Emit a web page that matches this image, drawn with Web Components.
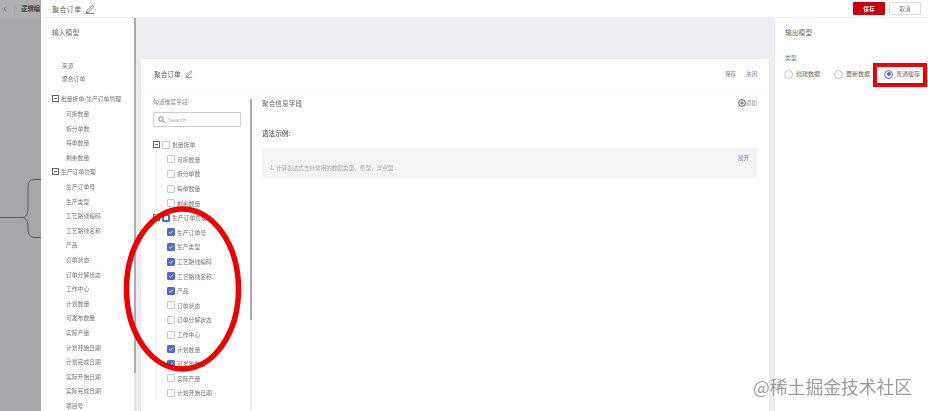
<!DOCTYPE html>
<html lang="zh"><head><meta charset="utf-8"><title>聚合订单</title>
<style>
html,body{margin:0;padding:0;background:#fff;}
body{width:928px;height:411px;overflow:hidden;font-family:"Noto Sans CJK SC","Liberation Sans",sans-serif;color:#666;}
</style></head><body>
<x-app></x-app>
<script>
const PENCIL=`<svg width="10" height="10" viewBox="0 0 10 10" fill="none" stroke="#555" stroke-width=".8"><path d="M1.5 7 6.8 1.7a.8.8 0 0 1 1.1 0l.4.4a.8.8 0 0 1 0 1.1L3 8.5H1.5ZM.5 9.6h8.5"/></svg>`;
const define=(name,css,html,init)=>customElements.define(name,class extends HTMLElement{
  connectedCallback(){ if(this.shadowRoot)return; const s=this.attachShadow({mode:'open'});
    s.innerHTML=`<style>${css}</style>`+(typeof html==='function'?html(this):html); if(init)init(this,s);} });

define('x-check',`:host{display:inline-flex;width:8px;height:8px;box-sizing:border-box;border:1px solid #c9c9c9;border-radius:1px;background:#fff;align-items:center;justify-content:center;flex:none}
:host([on]),:host([part]){background:#5468d4;border-color:#5468d4}
svg{display:block}i{width:4px;height:4px;background:#fff;display:block}`,
 h=>h.hasAttribute('on')?`<svg width="8" height="8" viewBox="0 0 8 8" fill="none" stroke="#fff" stroke-width="1.2"><path d="M1.4 4 3.3 5.8 6.6 2.2"/></svg>`:h.hasAttribute('part')?'<i></i>':'');

define('x-minus',`:host{display:inline-flex;width:7px;height:7px;box-sizing:border-box;border:1px solid #666;align-items:center;justify-content:center;flex:none;background:#fff}
i{display:block;width:3px;height:1px;background:#666}`,'<i></i>');

define('x-radio',`:host{display:inline-flex;align-items:center;gap:3px;font-size:6px;color:#666;line-height:10px;white-space:nowrap}
b{width:9px;height:9px;box-sizing:border-box;border:1px solid #c4c4c4;border-radius:50%;display:flex;align-items:center;justify-content:center;background:#fff}
:host([on]) b{border-color:#5468d4}:host([on]) b::after{content:"";width:4px;height:4px;border-radius:50%;background:#5468d4}`,
 `<b></b><slot></slot>`);

define('x-topbar',`:host{display:flex;height:18px;background:#fff;align-items:center;box-sizing:border-box;border-bottom:1px solid #f0f0f0;flex:none}
.back{width:41px;height:18px;background:#aeafb2;display:flex;align-items:center;overflow:hidden;box-sizing:border-box;padding-left:3px;font-size:6.4px;font-weight:700;color:#444;white-space:nowrap;flex:none}
.back svg{margin-right:7px;flex:none}
.back i{display:block;width:1px;height:7px;background:#a2a3a6;margin-right:6px;flex:none}
.t{margin-left:11px;font-size:7.3px;color:#666;display:flex;align-items:center;gap:4px;flex:1}
.b{width:32px;height:13px;border-radius:1px;font-size:5.7px;display:flex;align-items:center;justify-content:center;box-sizing:border-box;background:#c3000e;color:#fff;font-weight:700;margin-right:4px}
.b.c{background:#fff;color:#777;border:1px solid #ddd;margin-right:7px;font-weight:400}`,
 `<div class="back"><svg width="4" height="6" viewBox="0 0 4 6" fill="none" stroke="#555" stroke-width=".8"><path d="M3.2.6.8 3l2.4 2.4"/></svg><i></i>逻辑编</div><div class="t">聚合订单 ${PENCIL}</div><div class="b">保存</div><div class="b c">取消</div>`);

define('x-tree-row',`:host{display:flex;align-items:center;height:14.6px;font-size:5.8px;color:#747474;white-space:nowrap;gap:2px;flex:none}
:host([leaf]){padding-left:14px}`,`<slot></slot>`);

const fields=['生产订单号','生产类型','工艺路线编码','工艺路线名称','产品','订单状态','订单分解状态','工作中心','计划数量','可发布数量','实际产量','计划开始日期','计划完成日期','实际开始日期','实际完成日期','项目号'];
const first=['可拆数量','拆分单数','每单数量','剩余数量'];

define('x-input-panel',`:host{display:block;width:95px;flex:none;box-sizing:border-box;padding:7px 0 0 11px;background:#fff;overflow:hidden;position:relative;border-right:2px solid;border-image:linear-gradient(#a9abae 0 354px,#e6e7ea 354px) 1}
h3{margin:0;font-weight:400;font-size:6.8px;line-height:14px;color:#666}
.src{margin:19.5px 0 7.2px 10px;font-size:5.8px;line-height:13px;color:#777}
.tree{display:flex;flex-direction:column}`,
 `<h3>输入模型</h3><div class="src">来源<br>聚合订单</div><div class="tree">
 <x-tree-row><x-minus></x-minus>批量拆单-生产订单管理</x-tree-row>
 ${first.map(t=>`<x-tree-row leaf>${t}</x-tree-row>`).join('')}
 <x-tree-row><x-minus></x-minus>生产订单管理</x-tree-row>
 ${fields.map(t=>`<x-tree-row leaf>${t}</x-tree-row>`).join('')}</div>`);

const checked=new Set(['生产订单号','生产类型','工艺路线编码','工艺路线名称','产品','计划数量','可发布数量']);
define('x-field-tree',`:host{display:flex;flex-direction:column;margin-top:10.5px;position:relative}
.l{padding-left:14px}
.v{position:absolute;left:3px;top:11px;bottom:0;width:0;border-left:1px solid #eee}`,
 `<div class="v"></div>
 <x-tree-row><x-minus></x-minus><x-check></x-check>批量拆单</x-tree-row>
 ${first.map(t=>`<x-tree-row class="l"><x-check></x-check>${t}</x-tree-row>`).join('')}
 <x-tree-row><x-minus></x-minus><x-check part></x-check>生产订单管理</x-tree-row>
 ${fields.slice(0,12).map(t=>`<x-tree-row class="l"><x-check ${checked.has(t)?'on':''}></x-check>${t}</x-tree-row>`).join('')}`);

define('x-card',`:host{display:flex;flex-direction:column;background:#fff;height:100%;overflow:hidden;box-shadow:0 0 3px #e4e6e9}
header{height:30px;flex:none;display:flex;align-items:center;padding:0 12px 0 13px;gap:4px;font-size:6.7px;color:#555;border-bottom:1px solid #f8f8f8}
header .s{flex:1}header a{font-size:5.5px;color:#6a7bc8;margin-left:6px}
.body{flex:1;display:flex;min-height:0}
.l{width:109px;flex:none;box-sizing:border-box;padding:6px 0 0 12px;overflow:hidden}
.l h4{margin:0 0 4px;font-weight:400;font-size:5.8px;line-height:12px;color:#888}
.search{width:88px;height:15px;box-sizing:border-box;border:1px solid #cfcfcf;border-radius:1px;display:flex;align-items:center;gap:3px;padding-left:4px;font:5.8px "Liberation Sans",sans-serif;color:#aaa}
.bar{width:2px;flex:none;margin-top:9px;background:linear-gradient(#a9abae 0 221px,#ececec 221px)}
.r{flex:1;box-sizing:border-box;padding:7px 12px 0 10px;min-width:0}
.row{display:flex;justify-content:space-between;align-items:center;height:12px;font-size:6.7px;color:#666}
.add{display:flex;align-items:center;font-size:5.5px;color:#888}
.syn{margin-top:18px;font-size:6.6px;line-height:12px;color:#555;font-weight:500}
.box{margin-top:9px;height:30px;background:#f5f5f6;box-sizing:border-box;padding:5px 8px 0;color:#a8a8a8}
.box a{display:block;text-align:right;font-size:5.5px;line-height:10px;color:#6a7bc8}
.box p{margin:1px 0 0;font-size:5.6px;line-height:8px;white-space:nowrap}`,
 `<header>聚合订单 ${PENCIL.replace('width="10" height="10"','width="8" height="8"')}<span class="s"></span><a>保存</a><a>关闭</a></header>
 <div class="body"><div class="l"><h4>勾选维度字段:</h4>
 <div class="search"><svg width="7" height="7" viewBox="0 0 7 7" fill="none" stroke="#666" stroke-width=".8"><circle cx="3" cy="3" r="2.2"/><path d="m4.7 4.7 1.8 1.8"/></svg>Search</div>
 <x-field-tree></x-field-tree></div><div class="bar"></div>
 <div class="r"><div class="row">聚合信息字段<span class="add"><svg width="8" height="8" viewBox="0 0 8 8" fill="none" stroke="#333" stroke-width=".8"><circle cx="4" cy="4" r="3.4"/><path d="M2.3 4h3.4M4 2.3v3.4"/></svg>添加</span></div>
 <div class="syn">语法示例:</div>
 <div class="box"><a>展开</a><p>1. 计算表达式支持常用的数据类型，整型，浮点型 .</p></div></div></div>`);

define('x-output-panel',`:host{display:block;width:153px;flex:none;box-sizing:border-box;padding:7px 0 0 10px;background:#fff;position:relative}
h3{margin:0;font-weight:400;font-size:6.8px;line-height:14px;color:#666}
.k{margin-top:14px;font-size:5.8px;line-height:10px;color:#777}
.rs{display:flex;margin:6px 0 0 -1px;gap:14px;height:10px;align-items:center}
.mark{position:absolute;left:98px;top:45px;width:54px;height:24px;box-sizing:border-box;border:4px solid #f00000}`,
 `<h3>输出模型</h3><div class="k">类型</div><div class="rs"><x-radio>创建数据</x-radio><x-radio>更新数据</x-radio><x-radio on>普通缓存</x-radio></div><div class="mark"></div>`);

define('x-app',`:host{display:flex;flex-direction:column;width:928px;height:411px;position:relative;overflow:hidden;filter:blur(.45px)}
.main{flex:1;display:flex;min-height:0}
.side{width:41px;flex:none;background:#a5a7ab;position:relative}
.side svg{position:absolute;left:0;top:150px}
.mid{flex:1;min-width:0;background:#eceef1;padding:41px 6px 0 5px}
.ell{position:absolute;left:118px;top:200px;pointer-events:none}
.wm{position:absolute;left:753px;top:374px;font-size:17.8px;line-height:24px;color:#9b9b9b;white-space:nowrap}`,
 `<x-topbar></x-topbar><div class="main">
 <div class="side"><svg width="41" height="70" viewBox="0 0 41 70" fill="none" stroke="#565b70" stroke-width="1"><path d="M0 49.5H22M41 11.5H35C30 11.5 28 14 28 19V40C28 46 26 49.5 22 49.5 26 49.5 28 53 28 59V61C28 66 30 69.5 35 69.5H41"/></svg></div>
 <x-input-panel></x-input-panel><div class="mid"><x-card></x-card></div><x-output-panel></x-output-panel></div>
 <svg class="ell" width="130" height="180" viewBox="0 0 130 180" fill="none"><ellipse cx="64.5" cy="89" rx="56" ry="80" stroke="#ee0000" stroke-width="5.5"/></svg>
 <div class="wm">@稀土掘金技术社区</div>`);
</script></body></html>
